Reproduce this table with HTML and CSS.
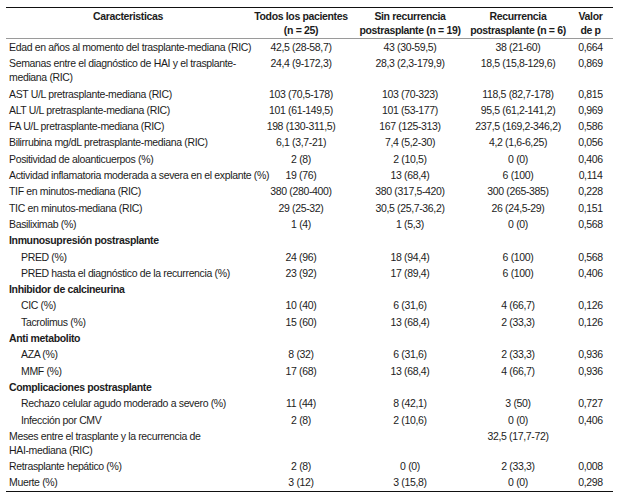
FILE: index.html
```html
<!DOCTYPE html>
<html lang="es">
<head>
<meta charset="utf-8">
<title>Características</title>
<link rel="stylesheet" href="styles.css">
</head>
<body>
<table class="tbl">
  <colgroup>
    <col class="c1"><col class="c2"><col class="c3"><col class="c4"><col class="c5">
  </colgroup>
  <thead>
    <tr>
      <th>Caracteristicas</th>
      <th>Todos los pacientes<br>(n = 25)</th>
      <th>Sin recurrencia<br>postrasplante (n = 19)</th>
      <th>Recurrencia<br>postrasplante (n = 6)</th>
      <th>Valor<br>de p</th>
    </tr>
  </thead>
  <tbody>
    <tr><td>Edad en años al momento del trasplante-mediana (RIC)</td><td>42,5 (28-58,7)</td><td>43 (30-59,5)</td><td>38 (21-60)</td><td>0,664</td></tr>
    <tr><td>Semanas entre el diagnóstico de HAI y el trasplante-<br>mediana (RIC)</td><td>24,4 (9-172,3)</td><td>28,3 (2,3-179,9)</td><td>18,5 (15,8-129,6)</td><td>0,869</td></tr>
    <tr><td>AST U/L pretrasplante-mediana (RIC)</td><td>103 (70,5-178)</td><td>103 (70-323)</td><td>118,5 (82,7-178)</td><td>0,815</td></tr>
    <tr><td>ALT U/L pretrasplante-mediana (RIC)</td><td>101 (61-149,5)</td><td>101 (53-177)</td><td>95,5 (61,2-141,2)</td><td>0,969</td></tr>
    <tr><td>FA U/L pretrasplante-mediana (RIC)</td><td>198 (130-311,5)</td><td>167 (125-313)</td><td>237,5 (169,2-346,2)</td><td>0,586</td></tr>
    <tr><td>Bilirrubina mg/dL pretrasplante-mediana (RIC)</td><td>6,1 (3,7-21)</td><td>7,4 (5,2-30)</td><td>4,2 (1,6-6,25)</td><td>0,056</td></tr>
    <tr><td>Positividad de aloanticuerpos (%)</td><td>2 (8)</td><td>2 (10,5)</td><td>0 (0)</td><td>0,406</td></tr>
    <tr><td>Actividad inflamatoria moderada a severa en el explante (%)</td><td>19 (76)</td><td>13 (68,4)</td><td>6 (100)</td><td>0,114</td></tr>
    <tr><td>TIF en minutos-mediana (RIC)</td><td>380 (280-400)</td><td>380 (317,5-420)</td><td>300 (265-385)</td><td>0,228</td></tr>
    <tr><td>TIC en minutos-mediana (RIC)</td><td>29 (25-32)</td><td>30,5 (25,7-36,2)</td><td>26 (24,5-29)</td><td>0,151</td></tr>
    <tr><td>Basiliximab (%)</td><td>1 (4)</td><td>1 (5,3)</td><td>0 (0)</td><td>0,568</td></tr>
    <tr class="sec"><td>Inmunosupresión postrasplante</td><td></td><td></td><td></td><td></td></tr>
    <tr class="sub"><td>PRED (%)</td><td>24 (96)</td><td>18 (94,4)</td><td>6 (100)</td><td>0,568</td></tr>
    <tr class="sub"><td>PRED hasta el diagnóstico de la recurrencia (%)</td><td>23 (92)</td><td>17 (89,4)</td><td>6 (100)</td><td>0,406</td></tr>
    <tr class="sec"><td>Inhibidor de calcineurina</td><td></td><td></td><td></td><td></td></tr>
    <tr class="sub"><td>CIC (%)</td><td>10 (40)</td><td>6 (31,6)</td><td>4 (66,7)</td><td>0,126</td></tr>
    <tr class="sub"><td>Tacrolimus (%)</td><td>15 (60)</td><td>13 (68,4)</td><td>2 (33,3)</td><td>0,126</td></tr>
    <tr class="sec"><td>Anti metabolito</td><td></td><td></td><td></td><td></td></tr>
    <tr class="sub"><td>AZA (%)</td><td>8 (32)</td><td>6 (31,6)</td><td>2 (33,3)</td><td>0,936</td></tr>
    <tr class="sub"><td>MMF (%)</td><td>17 (68)</td><td>13 (68,4)</td><td>4 (66,7)</td><td>0,936</td></tr>
    <tr class="sec"><td>Complicaciones postrasplante</td><td></td><td></td><td></td><td></td></tr>
    <tr class="sub"><td>Rechazo celular agudo moderado a severo (%)</td><td>11 (44)</td><td>8 (42,1)</td><td>3 (50)</td><td>0,727</td></tr>
    <tr class="sub"><td>Infección por CMV</td><td>2 (8)</td><td>2 (10,6)</td><td>0 (0)</td><td>0,406</td></tr>
    <tr><td>Meses entre el trasplante y la recurrencia de<br>HAI-mediana (RIC)</td><td></td><td></td><td>32,5 (17,7-72)</td><td></td></tr>
    <tr><td>Retrasplante hepático (%)</td><td>2 (8)</td><td>0 (0)</td><td>2 (33,3)</td><td>0,008</td></tr>
    <tr><td>Muerte (%)</td><td>3 (12)</td><td>3 (15,8)</td><td>0 (0)</td><td>0,298</td></tr>
  </tbody>
</table>
</body>
</html>
```

FILE: styles.css
```css
html, body {
  margin: 0;
  padding: 0;
  background: #ffffff;
}

body {
  padding: 7px 0 0 6px;
  font-family: "Liberation Sans", Arial, sans-serif;
  font-size: 10.5px;
  letter-spacing: -0.35px;
  color: #1c1c1c;
}

.tbl {
  width: 607px;
  border-collapse: collapse;
  table-layout: fixed;
  border-top: 1px solid #111;
  border-bottom: 1px solid #111;
}

.c1 { width: 244px; }
.c2 { width: 102px; }
.c3 { width: 116px; }
.c4 { width: 100px; }
.c5 { width: 45px; }

.tbl th {
  font-weight: bold;
  text-align: center;
  vertical-align: top;
  line-height: 14px;
  padding: 1px 0 1px;
  white-space: nowrap;
  border-bottom: 1px solid #9a9a9a;
}

.tbl td {
  line-height: 14px;
  padding: 1px 3px 1.3px;
  vertical-align: top;
  text-align: center;
  white-space: nowrap;
}

.tbl td:first-child {
  text-align: left;
}

.tbl .sec td:first-child {
  font-weight: bold;
}

.tbl .sub td:first-child {
  padding-left: 15px;
}
```
